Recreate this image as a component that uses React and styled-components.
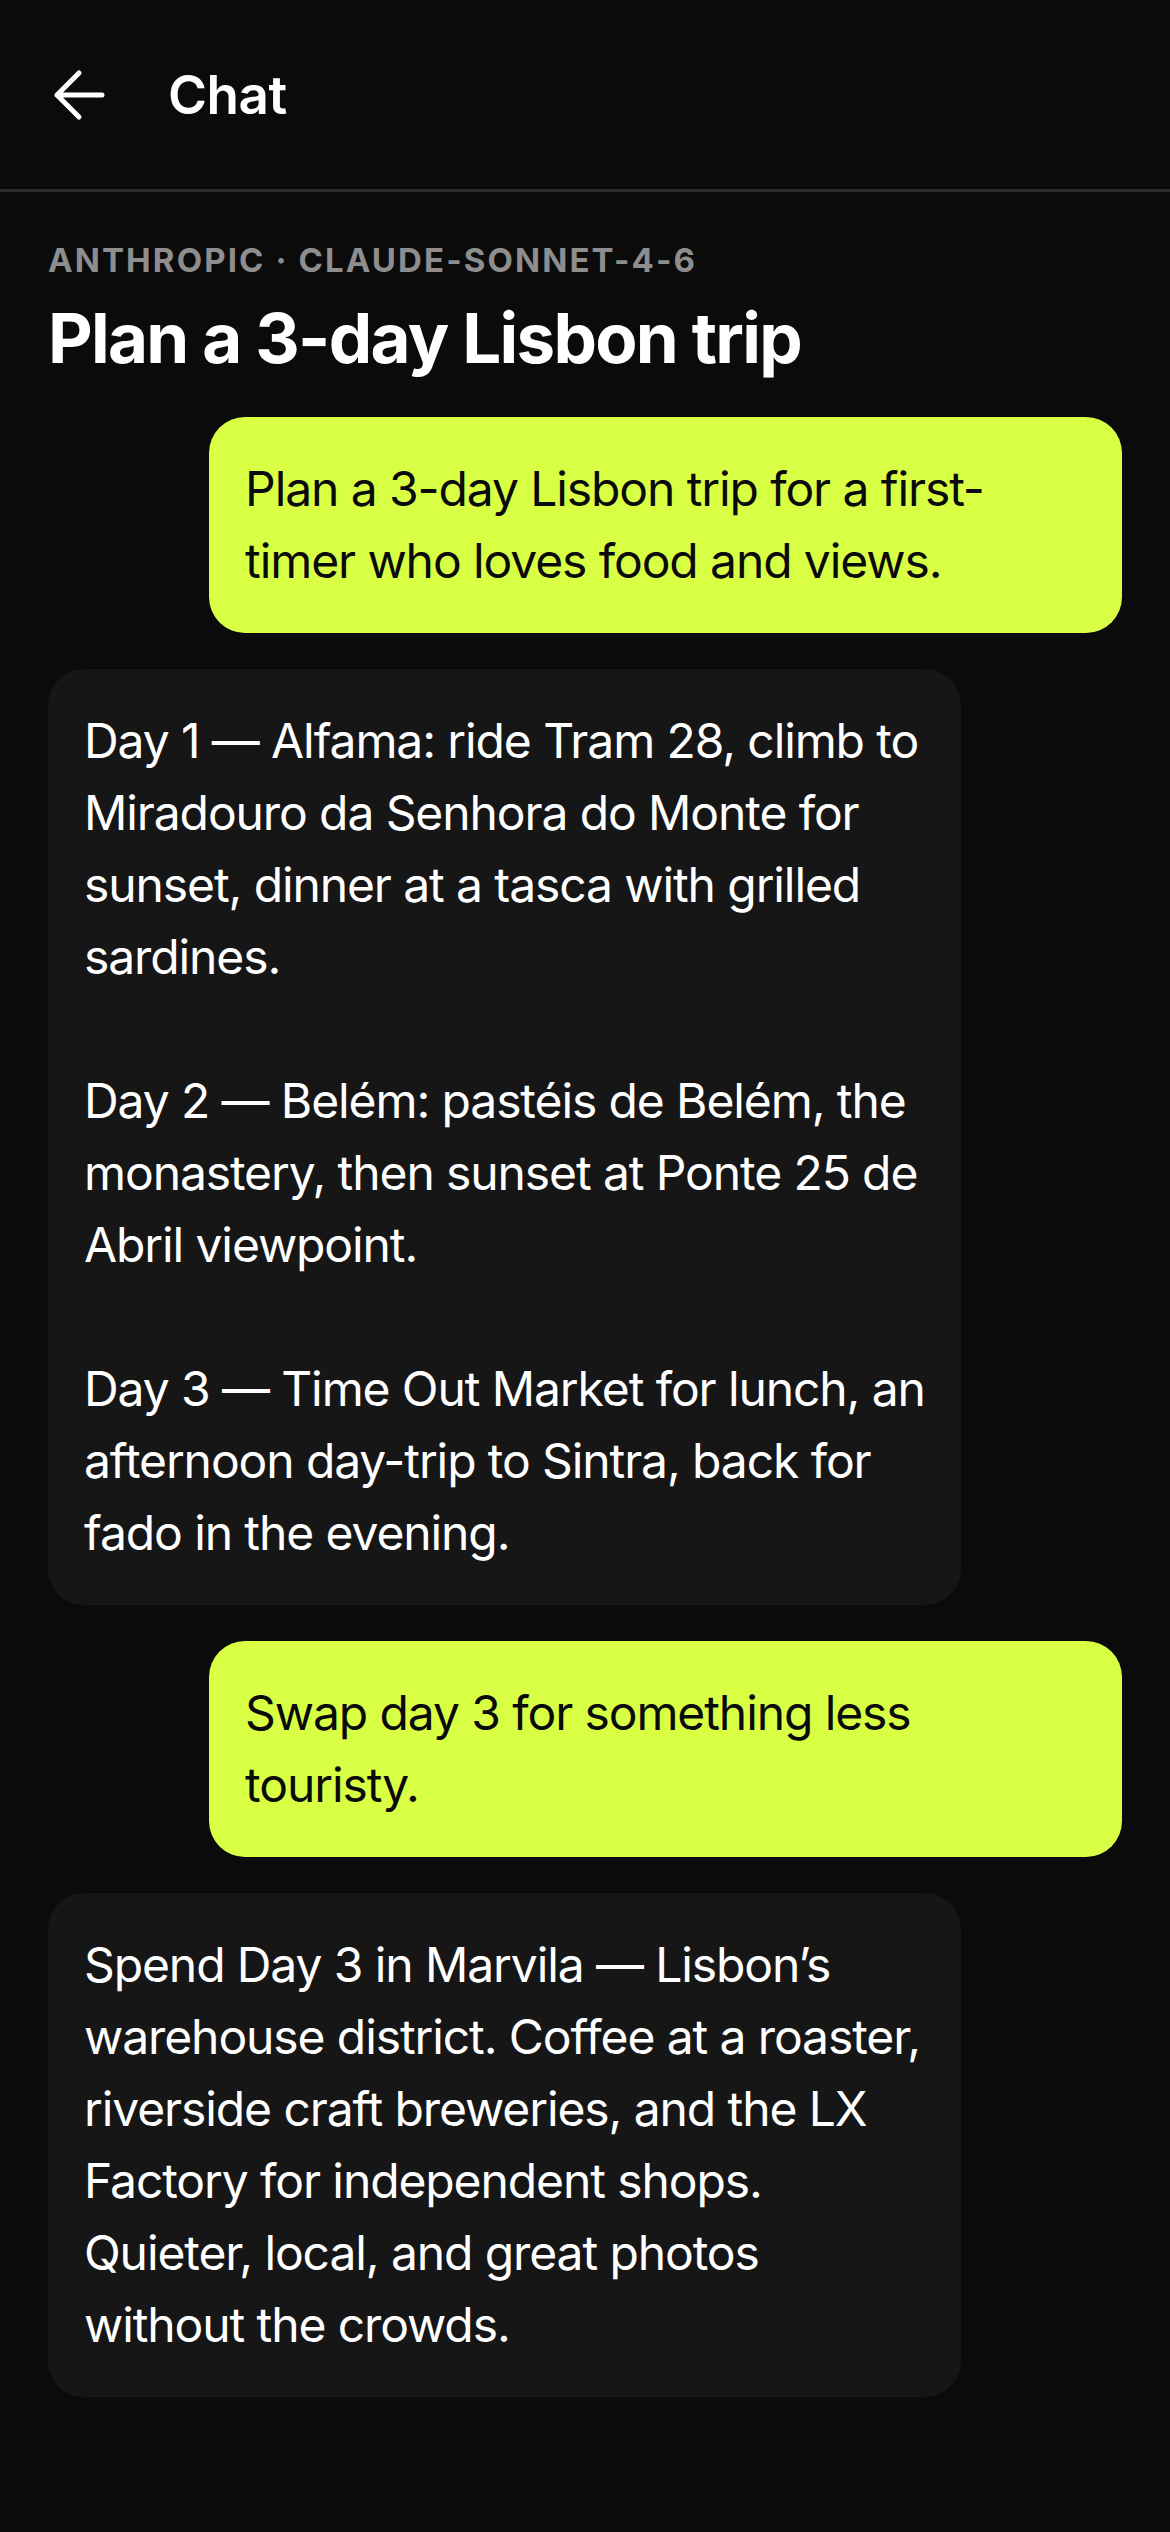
import React from "react";
import styled, { createGlobalStyle } from "styled-components";

const GlobalStyle = createGlobalStyle`
  body {
    margin: 0;
    background: #0b0b0b;
    font-family: Inter, "Noto Sans", sans-serif;
    -webkit-font-smoothing: antialiased;
  }
`;

const messages = [
  {
    role: "user",
    text: ["Plan a 3-day Lisbon trip for a first-timer who loves food and views."],
  },
  {
    role: "assistant",
    text: [
      "Day 1 — Alfama: ride Tram 28, climb to Miradouro da Senhora do Monte for sunset, dinner at a tasca with grilled sardines.",
      "Day 2 — Belém: pastéis de Belém, the monastery, then sunset at Ponte 25 de Abril viewpoint.",
      "Day 3 — Time Out Market for lunch, an afternoon day-trip to Sintra, back for fado in the evening.",
    ],
  },
  { role: "user", text: ["Swap day 3 for something less touristy."] },
  {
    role: "assistant",
    text: [
      "Spend Day 3 in Marvila — Lisbon’s warehouse district. Coffee at a roaster, riverside craft breweries, and the LX Factory for independent shops. Quieter, local, and great photos without the crowds.",
    ],
  },
];

function BackArrow() {
  return (
    <svg width="54" height="52" viewBox="0 0 54 52" fill="none">
      <path
        d="M50 26H5M27 4L5 26l22 22"
        stroke="#fff"
        strokeWidth="5"
        strokeLinecap="round"
        strokeLinejoin="round"
      />
    </svg>
  );
}

export default function App() {
  return (
    <Page>
      <GlobalStyle />
      <Header>
        <BackButton aria-label="Back">
          <BackArrow />
        </BackButton>
        <HeaderTitle>Chat</HeaderTitle>
      </Header>

      <Main>
        <Meta>Anthropic · claude-sonnet-4-6</Meta>
        <Title>Plan a 3-day Lisbon trip</Title>

        <Thread>
          {messages.map((m, i) => (
            <Bubble key={i} $user={m.role === "user"}>
              {m.text.map((p, j) => (
                <Para key={j}>{p}</Para>
              ))}
            </Bubble>
          ))}
        </Thread>
      </Main>
    </Page>
  );
}

const Page = styled.div`
  min-height: 2532px;
  background: #0b0b0b;
  color: #fff;
`;

const Header = styled.header`
  height: 192px;
  box-sizing: border-box;
  display: flex;
  align-items: center;
  gap: 62px;
  padding: 0 52px;
  border-bottom: 3px solid #2c2c2c;
`;

const BackButton = styled.button`
  background: none;
  border: 0;
  padding: 0;
  display: flex;
  cursor: pointer;
`;

const HeaderTitle = styled.h1`
  margin: 0;
  font-size: 53px;
  font-weight: 600;
  letter-spacing: -0.5px;
`;

const Main = styled.main`
  padding: 48px 48px 0;
`;

const Meta = styled.div`
  font-size: 33px;
  line-height: 40px;
  font-weight: 700;
  letter-spacing: 2.1px;
  text-transform: uppercase;
  color: #8e8e8e;
`;

const Title = styled.h2`
  margin: 17px 0 0;
  font-size: 69px;
  line-height: 82px;
  font-weight: 700;
  letter-spacing: -1.7px;
`;

const Thread = styled.div`
  margin-top: 38px;
  display: flex;
  flex-direction: column;
  gap: 36px;
`;

const Bubble = styled.div`
  align-self: ${(p) => (p.$user ? "flex-end" : "flex-start")};
  width: 85%;
  box-sizing: border-box;
  padding: 36px 35px 36px 36px;
  border-radius: 36px;
  background: ${(p) => (p.$user ? "#d9ff45" : "#161616")};
  color: ${(p) => (p.$user ? "#0b0b0b" : "#fff")};
  font-size: 48px;
  line-height: 72px;
  letter-spacing: -1.1px;
`;

const Para = styled.p`
  margin: 0;
  & + & {
    margin-top: 72px;
  }
`;
